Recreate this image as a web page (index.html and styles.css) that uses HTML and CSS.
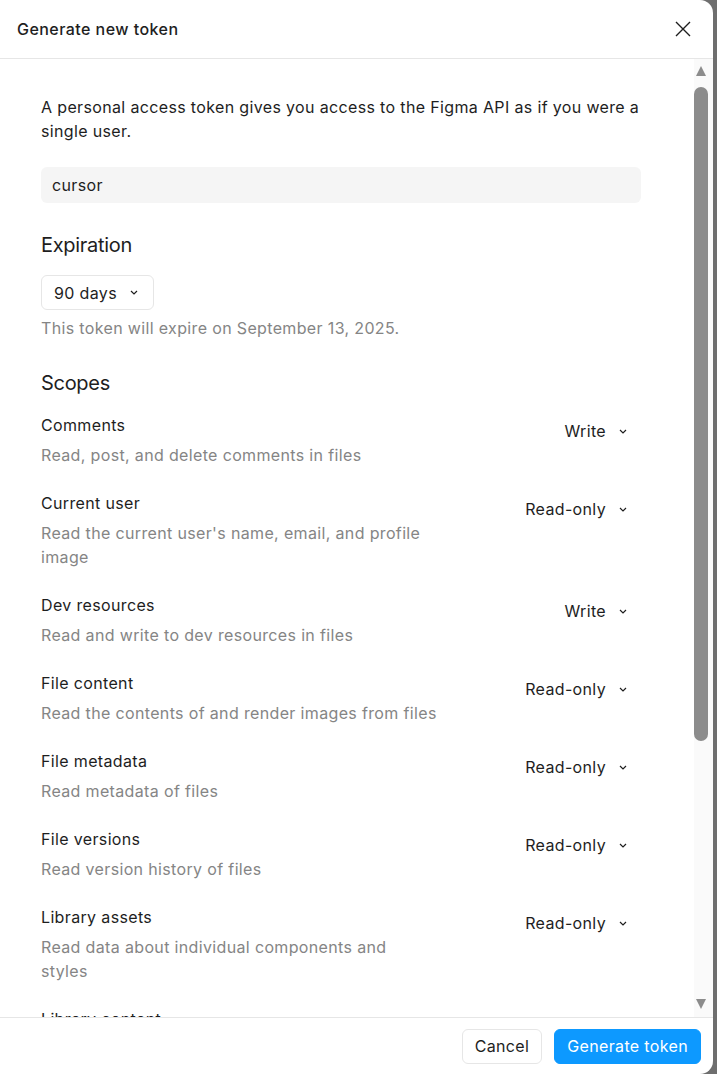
FILE: index.html
```html
<!DOCTYPE html>
<html lang="en">
<head>
<meta charset="utf-8">
<title>Generate new token</title>
<link rel="stylesheet" href="styles.css">
</head>
<body>
<div class="page">
  <div class="dialog">
    <header class="dialog-header">
      <h1 class="dialog-title">Generate new token</h1>
      <button class="close-btn" aria-label="Close">
        <svg width="16" height="16" viewBox="0 0 16 16"><path d="M1 1L15 15M15 1L1 15" stroke="#1e1e1e" stroke-width="1.4" fill="none"/></svg>
      </button>
    </header>
    <div class="dialog-body">
      <div class="scroll-content">
        <p class="intro">A personal access token gives you access to the Figma API as if you were a single user.</p>
        <div class="text-input">cursor</div>

        <h2 class="section-title expiration-title">Expiration</h2>
        <button class="select select-bordered">90 days
          <svg class="chev" width="8" height="5" viewBox="0 0 8 5"><path d="M1 1l3 3 3-3" stroke="#1e1e1e" stroke-width="1.2" fill="none"/></svg>
        </button>
        <p class="hint">This token will expire on September 13, 2025.</p>

        <h2 class="section-title scopes-title">Scopes</h2>
        <div class="scopes">
          <div class="scope">
            <div class="scope-info"><div class="scope-name">Comments</div><div class="scope-desc">Read, post, and delete comments in files</div></div>
            <button class="select">Write<svg class="chev" width="8" height="5" viewBox="0 0 8 5"><path d="M1 1l3 3 3-3" stroke="#1e1e1e" stroke-width="1.2" fill="none"/></svg></button>
          </div>
          <div class="scope">
            <div class="scope-info"><div class="scope-name">Current user</div><div class="scope-desc">Read the current user's name, email, and profile image</div></div>
            <button class="select">Read-only<svg class="chev" width="8" height="5" viewBox="0 0 8 5"><path d="M1 1l3 3 3-3" stroke="#1e1e1e" stroke-width="1.2" fill="none"/></svg></button>
          </div>
          <div class="scope">
            <div class="scope-info"><div class="scope-name">Dev resources</div><div class="scope-desc">Read and write to dev resources in files</div></div>
            <button class="select">Write<svg class="chev" width="8" height="5" viewBox="0 0 8 5"><path d="M1 1l3 3 3-3" stroke="#1e1e1e" stroke-width="1.2" fill="none"/></svg></button>
          </div>
          <div class="scope">
            <div class="scope-info"><div class="scope-name">File content</div><div class="scope-desc">Read the contents of and render images from files</div></div>
            <button class="select">Read-only<svg class="chev" width="8" height="5" viewBox="0 0 8 5"><path d="M1 1l3 3 3-3" stroke="#1e1e1e" stroke-width="1.2" fill="none"/></svg></button>
          </div>
          <div class="scope">
            <div class="scope-info"><div class="scope-name">File metadata</div><div class="scope-desc">Read metadata of files</div></div>
            <button class="select">Read-only<svg class="chev" width="8" height="5" viewBox="0 0 8 5"><path d="M1 1l3 3 3-3" stroke="#1e1e1e" stroke-width="1.2" fill="none"/></svg></button>
          </div>
          <div class="scope">
            <div class="scope-info"><div class="scope-name">File versions</div><div class="scope-desc">Read version history of files</div></div>
            <button class="select">Read-only<svg class="chev" width="8" height="5" viewBox="0 0 8 5"><path d="M1 1l3 3 3-3" stroke="#1e1e1e" stroke-width="1.2" fill="none"/></svg></button>
          </div>
          <div class="scope">
            <div class="scope-info"><div class="scope-name">Library assets</div><div class="scope-desc">Read data about individual components and styles</div></div>
            <button class="select">Read-only<svg class="chev" width="8" height="5" viewBox="0 0 8 5"><path d="M1 1l3 3 3-3" stroke="#1e1e1e" stroke-width="1.2" fill="none"/></svg></button>
          </div>
          <div class="scope">
            <div class="scope-info"><div class="scope-name">Library content</div><div class="scope-desc">Read published components and styles of files</div></div>
            <button class="select">Read-only<svg class="chev" width="8" height="5" viewBox="0 0 8 5"><path d="M1 1l3 3 3-3" stroke="#1e1e1e" stroke-width="1.2" fill="none"/></svg></button>
          </div>
        </div>
      </div>
      <div class="scrollbar">
        <div class="sb-arrow sb-up"></div>
        <div class="sb-track"><div class="sb-thumb"></div></div>
        <div class="sb-arrow sb-down"></div>
      </div>
    </div>
    <footer class="dialog-footer">
      <button class="btn btn-secondary">Cancel</button>
      <button class="btn btn-primary">Generate token</button>
    </footer>
  </div>
</div>
</body>
</html>
```

FILE: styles.css
```css
* { box-sizing: border-box; }
html, body { margin: 0; padding: 0; }
body {
  background: #6e6e6e;
  font-family: Inter, "Noto Sans", sans-serif;
  color: #1e1e1e;
  font-size: 16px;
  line-height: 24px;
  letter-spacing: 0.35px;
}
.page {
  width: 717px;
  height: 1074px;
  overflow: hidden;
}
.dialog {
  width: 713px;
  height: 1074px;
  background: #ffffff;
  border-radius: 0 13px 13px 0;
  display: flex;
  flex-direction: column;
  overflow: hidden;
}
.dialog-header {
  height: 59px;
  flex: none;
  display: flex;
  align-items: center;
  justify-content: space-between;
  padding: 0 22px 0 17px;
  border-bottom: 1px solid #e6e6e6;
}
.dialog-title {
  margin: 0;
  font-size: 16px;
  font-weight: 500;
  line-height: 24px;
  letter-spacing: 0.45px;
}
.close-btn {
  border: 0;
  background: none;
  padding: 0;
  width: 16px;
  height: 16px;
  display: flex;
}
.dialog-body {
  flex: 1;
  min-height: 0;
  display: flex;
}
.scroll-content {
  flex: 1;
  min-width: 0;
  overflow: hidden;
  padding: 36px 0 0 41px;
}
.scroll-content > * { width: 600px; }
.intro { margin: 0; }
.text-input {
  margin-top: 24px;
  height: 36px;
  background: #f5f5f5;
  border-radius: 6px;
  padding: 6px 11px;
}
.section-title {
  margin: 0;
  font-size: 20px;
  font-weight: 400;
  line-height: 28px;
  letter-spacing: -0.3px;
}
.expiration-title { margin-top: 28px; }
.scopes-title { margin-top: 29px; }
.select {
  font: inherit;
  letter-spacing: inherit;
  color: inherit;
  background: none;
  border: 0;
  height: 36px;
  display: inline-flex;
  align-items: center;
  gap: 13px;
  padding: 0 14px 0 12px;
  flex: none;
}
.select-bordered {
  width: auto;
  margin-top: 16px;
  height: 35px;
  border: 1px solid #e6e6e6;
  border-radius: 6px;
  padding: 0 15px 0 12px;
}
.chev { flex: none; }
.hint {
  margin: 6px 0 0;
  color: #858585;
}
.scopes {
  margin-top: 16px;
  display: flex;
  flex-direction: column;
  gap: 24px;
}
.scope {
  display: flex;
  justify-content: space-between;
  align-items: flex-start;
}
.scope-info { width: 396px; }
.scope-desc {
  margin-top: 6px;
  color: #858585;
}
.scrollbar {
  width: 19px;
  flex: none;
  background: #fafafa;
  display: flex;
  flex-direction: column;
  align-items: flex-start;
  padding: 6px 0 8px 0;
}
.sb-arrow {
  width: 0;
  height: 0;
  margin-left: 2px;
  border-left: 5.5px solid transparent;
  border-right: 5.5px solid transparent;
}
.sb-up { border-bottom: 10px solid #8c8c8c; margin-top: 1px; }
.sb-down { border-top: 10px solid #8c8c8c; }
.sb-track {
  flex: 1;
  width: 15px;
  padding-top: 11px;
}
.sb-thumb {
  width: 14px;
  height: 654px;
  background: #8c8c8c;
  border-radius: 7px;
}
.dialog-footer {
  flex: none;
  height: 57px;
  border-top: 1px solid #e6e6e6;
  display: flex;
  justify-content: flex-end;
  align-items: center;
  gap: 12px;
  padding: 0 12px;
}
.btn {
  font: inherit;
  letter-spacing: inherit;
  height: 35px;
  border-radius: 6px;
  padding: 0 12px;
  display: inline-flex;
  align-items: center;
}
.btn-secondary {
  background: #ffffff;
  border: 1px solid #e6e6e6;
  color: #1e1e1e;
}
.btn-primary {
  background: #0d99ff;
  border: 1px solid #0d99ff;
  color: #ffffff;
}
```
